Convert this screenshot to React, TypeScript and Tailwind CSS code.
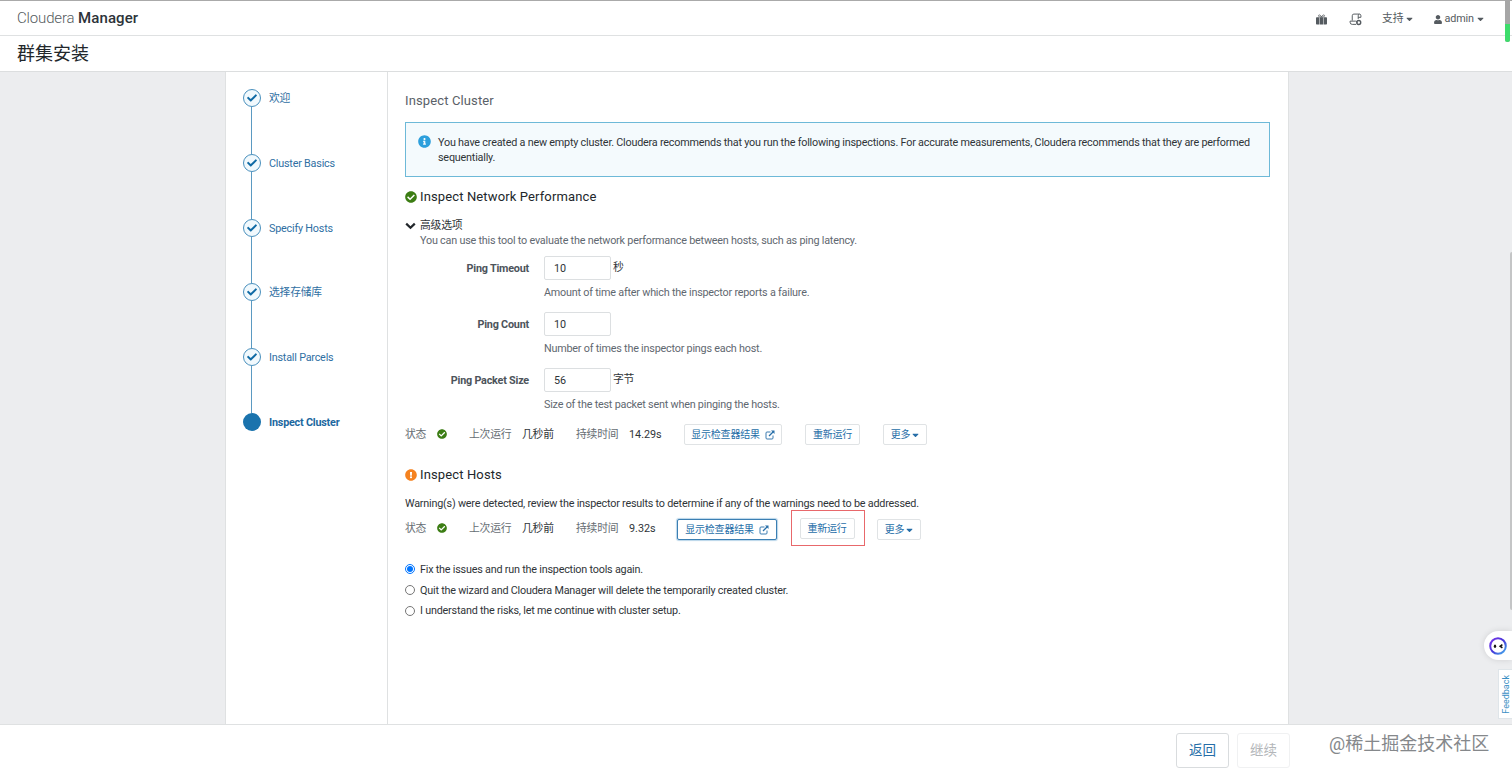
import { useState } from "react";
import {
  FaCaretDown,
  FaCheck,
  FaCheckCircle,
  FaExclamationCircle,
  FaInfoCircle,
  FaUser,
} from "react-icons/fa";

const steps = [
  "欢迎",
  "Cluster Basics",
  "Specify Hosts",
  "选择存储库",
  "Install Parcels",
  "Inspect Cluster",
];

const fields = [
  {
    label: "Ping Timeout",
    value: "10",
    unit: "秒",
    help: "Amount of time after which the inspector reports a failure.",
  },
  {
    label: "Ping Count",
    value: "10",
    unit: "",
    help: "Number of times the inspector pings each host.",
  },
  {
    label: "Ping Packet Size",
    value: "56",
    unit: "字节",
    help: "Size of the test packet sent when pinging the hosts.",
  },
];

const choices = [
  "Fix the issues and run the inspection tools again.",
  "Quit the wizard and Cloudera Manager will delete the temporarily created cluster.",
  "I understand the risks, let me continue with cluster setup.",
];

function ExternalLinkIcon() {
  return (
    <svg
      viewBox="0 0 20 20"
      className="ml-[5px] h-[10px] w-[10px]"
      fill="none"
      stroke="currentColor"
      strokeWidth="1.8"
    >
      <path d="M11 4H4a2 2 0 0 0-2 2v10a2 2 0 0 0 2 2h10a2 2 0 0 0 2-2v-5" />
      <path d="M8 12L16 4" strokeWidth="2.4" />
      <path d="M12 1h7v7z" fill="currentColor" stroke="none" />
    </svg>
  );
}

function GiftIcon() {
  return (
    <svg viewBox="0 0 22 22" className="h-[11px] w-[11px]" fill="currentColor">
      <path d="M0 8a1.5 1.5 0 0 1 1.5-1.5h4.500V21H1.500A1.500 1.500 0 0 1 0 19.500zM7 6.500h8V21H7zM16 6.500h4.500A1.500 1.500 0 0 1 22 8v11.500a1.500 1.500 0 0 1-1.500 1.500H16z" />
      <path
        d="M11 6C9 1 5 1 5 3.500S8 6 11 6zM11 6c2-5 6-5 6-2.500S14 6 11 6z"
        fill="none"
        stroke="currentColor"
        strokeWidth="1.6"
      />
    </svg>
  );
}

function ScrollIcon() {
  return (
    <svg
      viewBox="0 0 24 24"
      className="h-[13px] w-[13px]"
      fill="none"
      stroke="currentColor"
      strokeWidth="1.8"
      strokeLinejoin="round"
    >
      <path d="M6 14V5a3 3 0 0 1 3-3h10a3 3 0 0 1 3 3v3h-5" />
      <path d="M19 2a3 3 0 0 0-2 3v6M12 15H2v2a4 4 0 0 0 4 4h7" />
      <circle cx="18" cy="17.500" r="3.600" strokeWidth="2.600" />
      <path d="M12 15l4 2.500" />
    </svg>
  );
}

function Header() {
  return (
    <header className="flex h-9 shrink-0 items-center border-t border-b border-t-[#aaa] border-b-[#dfe1e2] pr-[28px] pl-[17px] text-[#555b60]">
      <div className="text-[15px] leading-5">
        <span className="font-light tracking-[-0.15px]">Cloudera</span>{" "}
        <span className="font-medium tracking-[0.12px] text-[#2d3339]">Manager</span>
      </div>
      <div className="ml-auto flex items-center pt-[2px] text-[10.8px] tracking-[-0.1px]">
        <GiftIcon />
        <span className="ml-[22px]">
          <ScrollIcon />
        </span>
        <span className="ml-[20px] flex items-center">
          支持 <FaCaretDown className="ml-[3px] h-[10px] w-[7px]" />
        </span>
        <span className="ml-[21px] flex items-center">
          <FaUser className="mr-[2px] h-[9px] w-[8px]" />
          admin <FaCaretDown className="ml-[3px] h-[10px] w-[7px]" />
        </span>
      </div>
    </header>
  );
}

function Sidebar() {
  return (
    <nav className="w-[163px] shrink-0 border-x border-[#dfe1e2] pt-[17px] pl-[17px] text-[#2f6fa3]">
      {steps.map((step, i) => {
        const last = i === steps.length - 1;
        return (
          <div key={step} className="flex h-[64.8px]">
            <div className="-ml-px flex w-[19px] flex-col items-center">
              <div
                className={
                  last
                    ? "h-[18px] w-[18px] shrink-0 rounded-full bg-[#1a73ad]"
                    : "flex h-[18px] w-[18px] shrink-0 items-center justify-center rounded-full border border-[#4a90bd] bg-[#f1f9fd]"
                }
              >
                {!last && <FaCheck className="h-[10px] w-[10px] text-[#0f6aa5]" />}
              </div>
              {!last && <div className="w-px flex-1 bg-[#5b9ac2]" />}
            </div>
            <span
              className={
                last
                  ? "ml-[8px] h-[18px] pt-px leading-[18px] font-bold text-[#1c689f]"
                  : "ml-[8px] h-[18px] pt-px leading-[18px]"
              }
            >
              {step}
            </span>
          </div>
        );
      })}
    </nav>
  );
}

function StatusRow({ duration, warned }: { duration: string; warned?: boolean }) {
  const btn =
    "flex h-[21px] items-center justify-center rounded-[2px] border border-[#e0e3e5] bg-white text-[10px] text-[#266ea8]";
  return (
    <div className="flex h-[22px] items-center text-[#2f3438]">
      <span className="w-[32px] text-[#666d73]">状态</span>
      <FaCheckCircle className="-mt-[3px] h-[10px] w-[10px] text-[#3c7d14]" />
      <span className="ml-[22px] w-[53px] text-[#666d73]">上次运行</span>
      <span className="w-[54px]">几秒前</span>
      <span className="w-[53px] text-[#666d73]">持续时间</span>
      <span className={warned ? "w-[48px] tracking-normal" : "w-[55px] tracking-normal"}>
        {duration}
      </span>
      <button
        className={
          warned
            ? `${btn} w-[100px] border-[#3b7fb3]! shadow-[0_0_1px_1px_#b9d5e9]`
            : `${btn} -mt-[2px] w-[98px]`
        }
      >
        显示检查器结果
        <ExternalLinkIcon />
      </button>
      {warned ? (
        <div className="-mt-[4px] ml-[14px] flex h-[36px] w-[74px] items-center justify-center border border-[#e8686b] pt-[2px] pr-[2px]">
          <button className={`${btn} w-[55px]`}>重新运行</button>
        </div>
      ) : (
        <button className={`${btn} -mt-[2px] ml-[23px] w-[55px]`}>重新运行</button>
      )}
      <button
        className={`${btn} ${warned ? "ml-[12px]" : "-mt-[2px] ml-[23px]"} w-[44px]`}
      >
        更多
        <FaCaretDown className="ml-[2px] h-[10px] w-[7px]" />
      </button>
    </div>
  );
}

function InspectCluster() {
  const [choice, setChoice] = useState(0);

  return (
    <main className="flex-1 pt-[19px] pr-[18px] pl-[17px]">
      <h2 className="h-5 text-[13px] leading-5 tracking-[0.13px] text-[#5a6168]">
        Inspect Cluster
      </h2>
      <div className="mt-[11px] flex h-[55px] border border-[#6db9d8] bg-[#f4fafd] pt-[12px] pl-[12px] leading-[15px]">
        <FaInfoCircle className="h-[13px] w-[13px] text-[#2d9fdc]" />
        <p className="ml-[7px] w-[820px]">
          You have created a new empty cluster. Cloudera recommends that you run the
          following inspections. For accurate measurements, Cloudera recommends that
          they are performed sequentially.
        </p>
      </div>

      <h3 className="mt-[10px] flex h-5 items-center text-[13px] tracking-[0.13px] text-[#22272b]">
        <FaCheckCircle className="mr-[3px] h-[12px] w-[12px] text-[#3c7d14]" />
        Inspect Network Performance
      </h3>
      <div className="mt-[11px] flex h-[15px] items-center">
        <svg
          viewBox="0 0 11 11"
          className="mr-[4px] h-[11px] w-[11px]"
          fill="none"
          stroke="#22272b"
          strokeWidth="2.2"
        >
          <path d="M1.200 3.600l4.300 4.200 4.300-4.200" />
        </svg>
        <span className="pt-[2px]">高级选项</span>
      </div>
      <p className="ml-[15px] h-[15px] leading-[15px] text-[#5f6870]">
        You can use this tool to evaluate the network performance between hosts, such
        as ping latency.
      </p>

      <div className="mt-[8px]">
        {fields.map((field) => (
          <div key={field.label} className="h-[56.2px]">
            <div className="flex h-[24px] items-center">
              <label className="w-[124px] pt-[2px] text-right font-bold text-[#4d545b]">
                {field.label}
              </label>
              <input
                defaultValue={field.value}
                className="ml-[15px] h-[24px] w-[67px] rounded-[2px] border border-[#dcdfe1] pl-[9px] tracking-normal"
              />
              <span className="ml-[2px]">{field.unit}</span>
            </div>
            <p className="mt-[5px] ml-[139px] leading-[16px] text-[#5f6870]">
              {field.help}
            </p>
          </div>
        ))}
      </div>

      <StatusRow duration="14.29s" />

      <h3 className="mt-[18px] flex h-5 items-center text-[13px] tracking-[0.13px] text-[#22272b]">
        <FaExclamationCircle className="mr-[3px] h-[12px] w-[12px] text-[#f58220]" />
        Inspect Hosts
      </h3>
      <p className="mt-[11px] h-[15px] leading-[15px]">
        Warning(s) were detected, review the inspector results to determine if any of
        the warnings need to be addressed.
      </p>
      <div className="mt-[8px]">
        <StatusRow duration="9.32s" warned />
      </div>

      <div className="mt-[19px]">
        {choices.map((text, i) => (
          <label key={text} className="flex h-[20.8px] items-center">
            <input
              type="radio"
              name="choice"
              checked={choice === i}
              onChange={() => setChoice(i)}
              className="-mt-px mr-[5px] h-[10px] w-[10px]"
            />
            {text}
          </label>
        ))}
      </div>
    </main>
  );
}

function Assistant() {
  return (
    <div className="absolute top-[631px] right-0 flex h-[29px] w-[28px] items-center rounded-l-full bg-white pl-[5px] shadow-[0_0_6px_rgba(0,0,0,0.12)]">
      <svg viewBox="0 0 18 18" className="h-[18px] w-[18px]" fill="none">
        <defs>
          <linearGradient id="ring" x1="0" y1="0" x2="1" y2="1">
            <stop offset="0" stopColor="#7a35ea" />
            <stop offset="0.5" stopColor="#4636d8" />
            <stop offset="1" stopColor="#43b5ee" />
          </linearGradient>
        </defs>
        <circle cx="9" cy="9" r="7.8" stroke="url(#ring)" strokeWidth="2" />
        <ellipse cx="6" cy="9.3" rx="1.2" ry="1.8" fill="#111" />
        <path d="M13.4 7.6l-2.2 1.6 2.2 1.6" stroke="#111" strokeWidth="1.6" />
      </svg>
    </div>
  );
}

export default function App() {
  return (
    <div className="relative flex h-[776px] w-[1512px] flex-col overflow-hidden bg-white font-['Roboto','Noto_Sans_CJK_SC',sans-serif] text-[10.8px] tracking-[-0.21px] text-[#2f3438]">
      <Header />
      <div className="h-[36px] shrink-0 border-b border-[#dcdedf] pl-[17px] text-[18px] leading-[35px] tracking-normal text-[#22272b]">
        群集安装
      </div>
      <div className="flex min-h-0 flex-1 bg-[#ecedef] pl-[225px]">
        <div className="flex w-[1064px] border-r border-[#dfe1e2] bg-white">
          <Sidebar />
          <InspectCluster />
        </div>
      </div>
      <footer className="flex h-[52px] shrink-0 items-start border-t border-[#dfe1e2] pt-[8px] pl-[1176px] tracking-normal">
        <button className="h-[35px] w-[53px] rounded-[3px] border border-[#d9dcde] text-[13.5px] text-[#266ea8]">
          返回
        </button>
        <button className="ml-[8px] h-[35px] w-[53px] rounded-[3px] border border-[#f0f1f2] text-[13.5px] text-[#b3b6b9]">
          继续
        </button>
        <span className="ml-[39px] text-[18px] leading-[21px] whitespace-nowrap text-[#85888b]">
          @稀土掘金技术社区
        </span>
      </footer>

      {/* page scrollbar and floating widgets on the right edge */}
      <div className="absolute top-0 right-[2px] h-[42px] w-[5px] rounded-b-full bg-[#a6a6a6]">
        <div className="mt-[24px] h-[18px] rounded-b-full bg-[#3ddc6b]" />
      </div>
      <div className="absolute top-[252px] right-0 h-[358px] w-[2px] rounded-l bg-[#c4c5c6]" />
      <Assistant />
      <div className="absolute top-[669px] right-0 flex h-[50px] w-[14px] items-center justify-center border border-r-0 border-[#dfe5e9] bg-white pl-[3px] text-[9px] tracking-normal text-[#3a8fc4]">
        <span className="rotate-180 [writing-mode:vertical-rl]">Feedback</span>
      </div>
    </div>
  );
}
